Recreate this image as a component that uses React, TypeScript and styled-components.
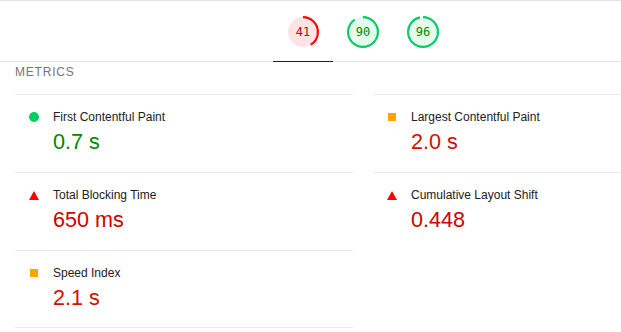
import React from "react";
import styled, { createGlobalStyle } from "styled-components";

const Global = createGlobalStyle`
  html, body { margin: 0; padding: 0; background: #fff; overflow: hidden; }
  body { font-family: "Liberation Sans", Arial, sans-serif; }
`;

const Report = styled.div`
  width: 726px;
  background: #fff;
`;

const Header = styled.div`
  display: flex;
  justify-content: center;
  border-top: 1px solid #e4e4e4;
  border-bottom: 1px solid #e4e4e4;
`;

const Tab = styled.div<{ $active?: boolean }>`
  width: 60px;
  height: 61px;
  display: flex;
  justify-content: center;
  padding-top: 15px;
  box-sizing: border-box;
  margin-bottom: -1px;
  border-bottom: 1px solid ${(p) => (p.$active ? "#212121" : "transparent")};
`;

const GaugeWrap = styled.div`
  position: relative;
  width: 32px;
  height: 32px;
`;

const GaugeLabel = styled.span<{ $color: string }>`
  position: absolute;
  inset: 0;
  display: flex;
  align-items: center;
  justify-content: center;
  font-family: "DejaVu Sans Mono", monospace;
  font-size: 12px;
  color: ${(p) => p.$color};
`;

const Section = styled.div`
  padding: 2px 15px 0;
`;

const GroupTitle = styled.div`
  font-size: 12px;
  line-height: 16px;
  letter-spacing: 0.8px;
  text-transform: uppercase;
  color: #757575;
  margin-bottom: 14px;
`;

const Grid = styled.div`
  display: grid;
  grid-template-columns: 1fr 1fr;
  column-gap: 20px;
`;

const Metric = styled.div<{ $last?: boolean }>`
  border-top: 1px solid #ebebeb;
  border-bottom: ${(p) => (p.$last ? "1px solid #ebebeb" : "none")};
  padding: 14px 0 0 14px;
  box-sizing: border-box;
  height: ${(p) => (p.$last ? "78px" : "78px")};
`;

const TitleRow = styled.div`
  display: flex;
  align-items: center;
  gap: 14px;
  font-size: 12px;
  line-height: 16px;
  color: #212121;
`;

const IconBox = styled.span`
  width: 10px;
  height: 10px;
  display: flex;
  align-items: center;
  justify-content: center;
  flex: none;
`;

const Dot = styled.span`
  width: 10px;
  height: 10px;
  border-radius: 50%;
  background: #00cc66;
`;

const Square = styled.span`
  width: 8px;
  height: 8px;
  background: #ffa400;
`;

const Triangle = styled.span`
  width: 0;
  height: 0;
  border-left: 5px solid transparent;
  border-right: 5px solid transparent;
  border-bottom: 9px solid #ff0000;
`;

const Value = styled.div<{ $color: string }>`
  margin: 4px 0 0 24px;
  font-size: 21.6px;
  line-height: 26px;
  color: ${(p) => p.$color};
`;

type Level = "pass" | "average" | "fail";

const palette: Record<Level, { fill: string; stroke: string; text: string }> = {
  pass: { fill: "#e5fbee", stroke: "#00cc66", text: "#008800" },
  average: { fill: "#fff3e0", stroke: "#ffa400", text: "#c33300" },
  fail: { fill: "#fde3e3", stroke: "#ff0000", text: "#cc0000" },
};

function Gauge({ score }: { score: number }) {
  const level: Level = score >= 90 ? "pass" : score >= 50 ? "average" : "fail";
  const c = palette[level];
  const circ = 2 * Math.PI * 56;
  const len = (score / 100) * circ;
  return (
    <GaugeWrap>
      <svg width="32" height="32" viewBox="0 0 120 120">
        <circle cx="60" cy="60" r="56" fill={c.fill} stroke="none" />
        <circle
          cx="60"
          cy="60"
          r="56"
          fill="none"
          stroke={c.stroke}
          strokeWidth="8"
          strokeDasharray={`${len} ${circ}`}
          transform="rotate(-90 60 60)"
        />
      </svg>
      <GaugeLabel $color={c.text}>{score}</GaugeLabel>
    </GaugeWrap>
  );
}

type Kind = "pass" | "average" | "fail";

const metrics: { title: string; value: string; kind: Kind }[] = [
  { title: "First Contentful Paint", value: "0.7 s", kind: "pass" },
  { title: "Largest Contentful Paint", value: "2.0 s", kind: "average" },
  { title: "Total Blocking Time", value: "650 ms", kind: "fail" },
  { title: "Cumulative Layout Shift", value: "0.448", kind: "fail" },
  { title: "Speed Index", value: "2.1 s", kind: "average" },
];

const valueColor: Record<Kind, string> = {
  pass: "#008800",
  average: "#cc1100",
  fail: "#cc0000",
};

function Icon({ kind }: { kind: Kind }) {
  return (
    <IconBox>
      {kind === "pass" ? <Dot /> : kind === "average" ? <Square /> : <Triangle />}
    </IconBox>
  );
}

export default function App() {
  return (
    <Report>
      <Global />
      <Header>
        <Tab $active>
          <Gauge score={41} />
        </Tab>
        <Tab>
          <Gauge score={90} />
        </Tab>
        <Tab>
          <Gauge score={96} />
        </Tab>
      </Header>
      <Section>
        <GroupTitle>Metrics</GroupTitle>
        <Grid>
          {metrics.map((m, i) => (
            <Metric key={m.title} $last={i === metrics.length - 1}>
              <TitleRow>
                <Icon kind={m.kind} />
                {m.title}
              </TitleRow>
              <Value $color={valueColor[m.kind]}>{m.value}</Value>
            </Metric>
          ))}
        </Grid>
      </Section>
    </Report>
  );
}
